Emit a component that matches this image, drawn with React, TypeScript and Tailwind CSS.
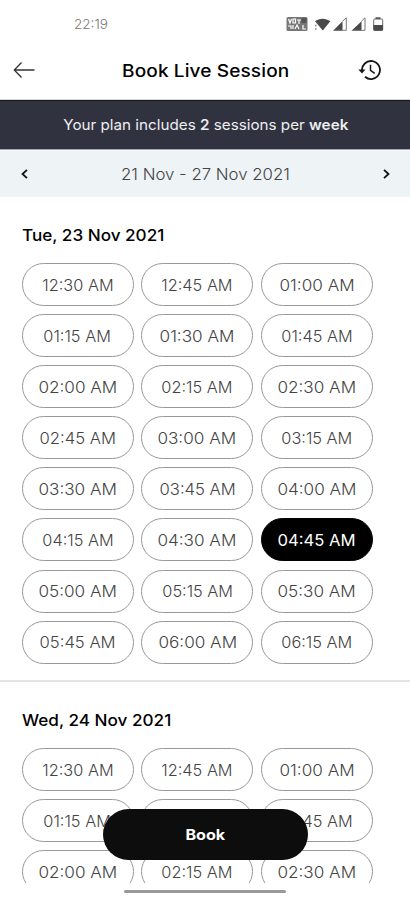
import React, { useState } from "react";

type Day = {
  id: string;
  label: string;
  slots: string[];
};

const days: Day[] = [
  {
    id: "tue",
    label: "Tue, 23 Nov 2021",
    slots: [
      "12:30 AM",
      "12:45 AM",
      "01:00 AM",
      "01:15 AM",
      "01:30 AM",
      "01:45 AM",
      "02:00 AM",
      "02:15 AM",
      "02:30 AM",
      "02:45 AM",
      "03:00 AM",
      "03:15 AM",
      "03:30 AM",
      "03:45 AM",
      "04:00 AM",
      "04:15 AM",
      "04:30 AM",
      "04:45 AM",
      "05:00 AM",
      "05:15 AM",
      "05:30 AM",
      "05:45 AM",
      "06:00 AM",
      "06:15 AM",
    ],
  },
  {
    id: "wed",
    label: "Wed, 24 Nov 2021",
    slots: [
      "12:30 AM",
      "12:45 AM",
      "01:00 AM",
      "01:15 AM",
      "01:30 AM",
      "01:45 AM",
      "02:00 AM",
      "02:15 AM",
      "02:30 AM",
    ],
  },
];

const slotWidth = (time: string) => {
  if (time.startsWith("12") || time.includes(":15") || time === "01:45 AM") {
    return "scale-x-[1.02]";
  }
  if (time.endsWith(":45 AM")) {
    return "scale-x-[1.04]";
  }
  return "scale-x-[1.07]";
};

const StatusIcons = () => (
  <svg width="100" height="18" viewBox="0 0 100 18" fill="#4a4a4a">
    {/* volte badge */}
    <rect x="0.5" y="2" width="21" height="14" rx="1.5" fill="#777" />
    <path
      d="M2.5 4l1.5 4 1.5-4M7 4v4h2.5V4zM11 5h4M13 5v4M2 11h3v3M7 10v4M9 14l2-4 2 4M17 10v4h3"
      fill="none"
      stroke="#fff"
      strokeWidth="1.2"
    />
    <rect x="15.5" y="3" width="5" height="5" fill="#555" />
    {/* wifi */}
    <path d="M29 6.2C33 2.8 40 2.8 44.3 6.2L36.8 15.5z" />
    <path d="M29 10.5h1.5M29 14h1.5" stroke="#888" strokeWidth="1.3" />
    {/* signal */}
    <path d="M47 15.8L56.5 6.2V15.8z" />
    <path d="M56.5 6.2L60.3 2.8V15.3H49" fill="none" stroke="#777" />
    <path d="M65.5 15.8L75.5 6.2V15.8z" />
    <path d="M75.5 6.2L79 2.8V15.3H68" fill="none" stroke="#777" />
    {/* battery */}
    <path d="M89.5 2.3h5v2h-5z" />
    <rect x="87.7" y="4" width="9" height="11.5" rx="1.2" fill="#fff" stroke="#666" />
    <path d="M87.5 10h9.4v5.5h-9.4z" />
  </svg>
);

const App = () => {
  const [selected, setSelected] = useState("tue-04:45 AM");

  return (
    <div className="relative flex h-[900px] w-[410px] flex-col overflow-hidden bg-white font-['Inter',sans-serif] text-black">
      <div className="flex h-10 shrink-0 items-center justify-between pl-[74px] pr-[24px] pt-[8px]">
        <span className="text-[13.5px] font-light text-[#777]">22:19</span>
        <StatusIcons />
      </div>

      <header className="flex h-[60px] shrink-0 items-center justify-between border-b border-[#d8d8d8] pl-[13px] pr-[28px]">
        <button aria-label="Back">
          <svg width="22" height="18" viewBox="0 0 22 18" fill="none" stroke="#333" strokeWidth="1.3">
            <path d="M21.5 9H1.5M8.5 1.5L1.3 9l7.2 7.5" />
          </svg>
        </button>
        <h1 className="pl-[18px] pt-[5px] text-[17px] font-medium">
          <span className="inline-block scale-x-[1.12] tracking-[0.1px]">Book Live Session</span>
        </h1>
        <button aria-label="History">
          <svg width="24" height="22" viewBox="0 0 24 22" fill="none" stroke="#181818" strokeWidth="1.8">
            <path d="M4 12A9 9 0 1 1 7 17.8" />
            <path d="M12.5 5.8V11.3l4.2 3" strokeWidth="1.5" />
            <path d="M0.3 10.5H7.5L4 14.6z" fill="#181818" stroke="none" />
          </svg>
        </button>
      </header>

      <div className="flex h-[49px] shrink-0 items-center justify-center bg-[#30323f] pl-[2px] pt-px shadow-[inset_0_1px_0_#151720]">
        <p className="scale-x-[1.05] whitespace-nowrap text-[14.5px] text-[#eeeef0]">
          Your plan includes <b className="font-semibold">2</b> sessions per{" "}
          <b className="font-semibold">week</b>
        </p>
      </div>

      <div className="flex h-[48px] shrink-0 items-center justify-between border-t border-[#a3a6ac] bg-[#eef3f6] pl-[21px] pr-[20px] shadow-[inset_0_1px_0_#f8fafb]">
        <button aria-label="Previous week">
          <svg width="7" height="10" viewBox="0 0 7 10" fill="none" stroke="#111" strokeWidth="1.8">
            <path d="M6 .8L1.5 5 6 9.2" />
          </svg>
        </button>
        <span className="scale-x-[1.05] text-[16px] font-light text-[#444]">21 Nov - 27 Nov 2021</span>
        <button aria-label="Next week">
          <svg width="7" height="10" viewBox="0 0 7 10" fill="none" stroke="#111" strokeWidth="1.8">
            <path d="M1 .8L5.5 5 1 9.2" />
          </svg>
        </button>
      </div>

      <main className="h-[686px] shrink-0 overflow-hidden">
        {days.map((day) => (
          <section
            key={day.id}
            className="h-[485px] border-b-2 border-[#e4e4e4] pl-[21.5px] pt-[26px]"
          >
            <h2 className="h-6 origin-left scale-x-[1.07] text-[16px] font-medium leading-6">
              {day.label}
            </h2>
            <div className="mt-4 grid grid-cols-[112px_112px_112px] gap-x-[7.75px] gap-y-[8.1px]">
              {day.slots.map((time) => {
                const id = `${day.id}-${time}`;
                return (
                  <button
                    key={id}
                    onClick={() => setSelected(id)}
                    className={`h-[43px] rounded-full border text-[16px] ${
                      selected === id
                        ? "border-black bg-black font-normal text-white"
                        : "border-[#999] font-light text-[#444]"
                    }`}
                  >
                    <span className={`inline-block ${slotWidth(time)}`}>{time}</span>
                  </button>
                );
              })}
            </div>
          </section>
        ))}
      </main>

      <button className="absolute left-[103px] top-[809px] h-[51px] w-[205px] rounded-full bg-[#0d0d0d] text-[14px] font-bold text-white">
        <span className="inline-block scale-x-[1.15]">Book</span>
      </button>
      <div className="ml-[124px] mt-[7px] h-[3px] w-[162px] shrink-0 rounded-full bg-[#999]" />
    </div>
  );
};

export default App;
